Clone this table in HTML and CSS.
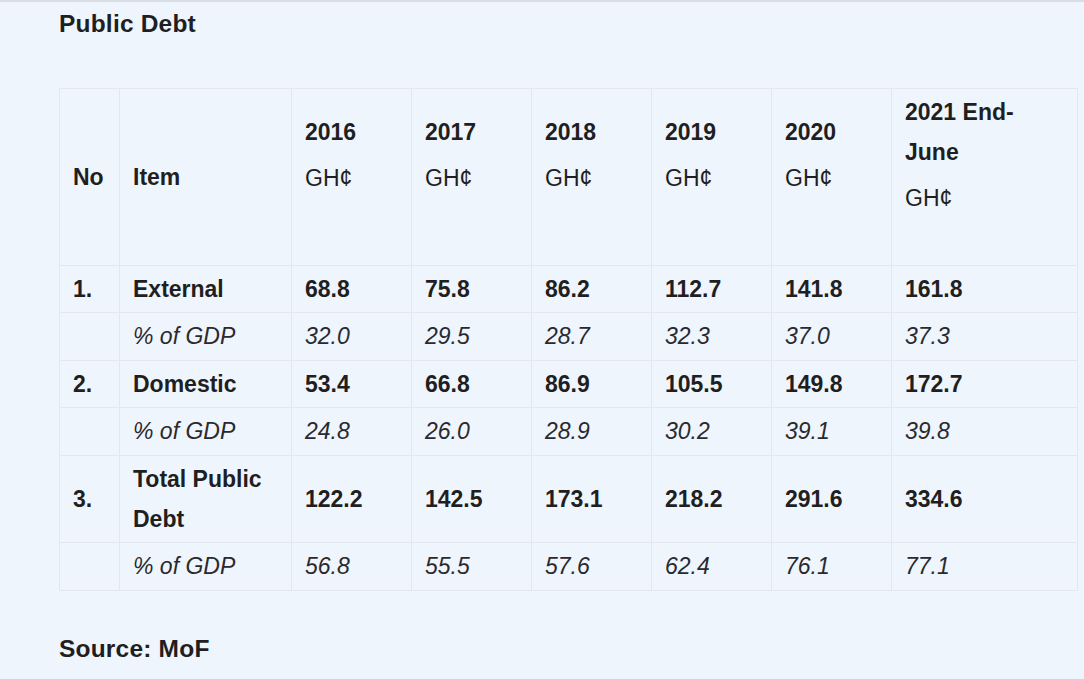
FILE: index.html
```html
<!DOCTYPE html>
<html lang="en">
<head>
<meta charset="utf-8">
<title>Public Debt</title>
<link rel="stylesheet" href="styles.css">
</head>
<body>
<div class="page">
  <h2 class="title">Public Debt</h2>
  <table class="debt">
    <colgroup>
      <col class="c-no"><col class="c-item"><col class="c-yr"><col class="c-yr"><col class="c-yr"><col class="c-yr"><col class="c-yr"><col class="c-last">
    </colgroup>
    <thead>
      <tr>
        <th class="plain">No</th>
        <th class="plain">Item</th>
        <th class="yr"><div class="y">2016</div><div class="cur">GH¢</div></th>
        <th class="yr"><div class="y">2017</div><div class="cur">GH¢</div></th>
        <th class="yr"><div class="y">2018</div><div class="cur">GH¢</div></th>
        <th class="yr"><div class="y">2019</div><div class="cur">GH¢</div></th>
        <th class="yr"><div class="y">2020</div><div class="cur">GH¢</div></th>
        <th class="yr"><div class="y">2021 End-June</div><div class="cur">GH¢</div></th>
      </tr>
    </thead>
    <tbody>
      <tr class="main"><td>1.</td><td>External</td><td>68.8</td><td>75.8</td><td>86.2</td><td>112.7</td><td>141.8</td><td>161.8</td></tr>
      <tr class="pct"><td></td><td>% of GDP</td><td>32.0</td><td>29.5</td><td>28.7</td><td>32.3</td><td>37.0</td><td>37.3</td></tr>
      <tr class="main"><td>2.</td><td>Domestic</td><td>53.4</td><td>66.8</td><td>86.9</td><td>105.5</td><td>149.8</td><td>172.7</td></tr>
      <tr class="pct"><td></td><td>% of GDP</td><td>24.8</td><td>26.0</td><td>28.9</td><td>30.2</td><td>39.1</td><td>39.8</td></tr>
      <tr class="main"><td>3.</td><td>Total Public Debt</td><td>122.2</td><td>142.5</td><td>173.1</td><td>218.2</td><td>291.6</td><td>334.6</td></tr>
      <tr class="pct"><td></td><td>% of GDP</td><td>56.8</td><td>55.5</td><td>57.6</td><td>62.4</td><td>76.1</td><td>77.1</td></tr>
    </tbody>
  </table>
  <p class="source">Source: MoF</p>
</div>
</body>
</html>
```
FILE: styles.css
```css
html, body {
  margin: 0;
  padding: 0;
}
body {
  background: #eff5fd;
  border-top: 2px solid #dadee4;
  font-family: "Liberation Sans", Arial, sans-serif;
  color: #1f1f22;
  height: 677px;
  overflow: hidden;
}
.page {
  padding: 0 0 0 59px;
}
.title {
  margin: 0;
  padding-top: 6px;
  font-size: 24.5px;
  line-height: 32px;
  font-weight: bold;
  letter-spacing: 0.2px;
}
.debt {
  margin-top: 48px;
  width: 1018px;
  table-layout: fixed;
  border-collapse: collapse;
  font-size: 23px;
  line-height: 40px;
}
.c-no { width: 60px; }
.c-item { width: 172px; }
.c-yr { width: 120px; }
.c-last { width: 186px; }
.debt th, .debt td {
  border: 1px solid #e3e8ef;
  padding: 3px 13px;
  text-align: left;
  vertical-align: middle;
}
.debt th {
  font-weight: bold;
}
.debt th.yr {
  padding: 3px 13px 47px;
}
.debt .cur {
  font-weight: normal;
  margin-top: 6px;
}
.main td {
  font-weight: bold;
}
.pct td {
  font-style: italic;
  font-weight: normal;
  color: #2a2a2e;
  padding-bottom: 4px;
}
.source {
  margin: 42px 0 0;
  font-size: 24.5px;
  line-height: 32px;
  font-weight: bold;
  letter-spacing: 0.2px;
}
```
